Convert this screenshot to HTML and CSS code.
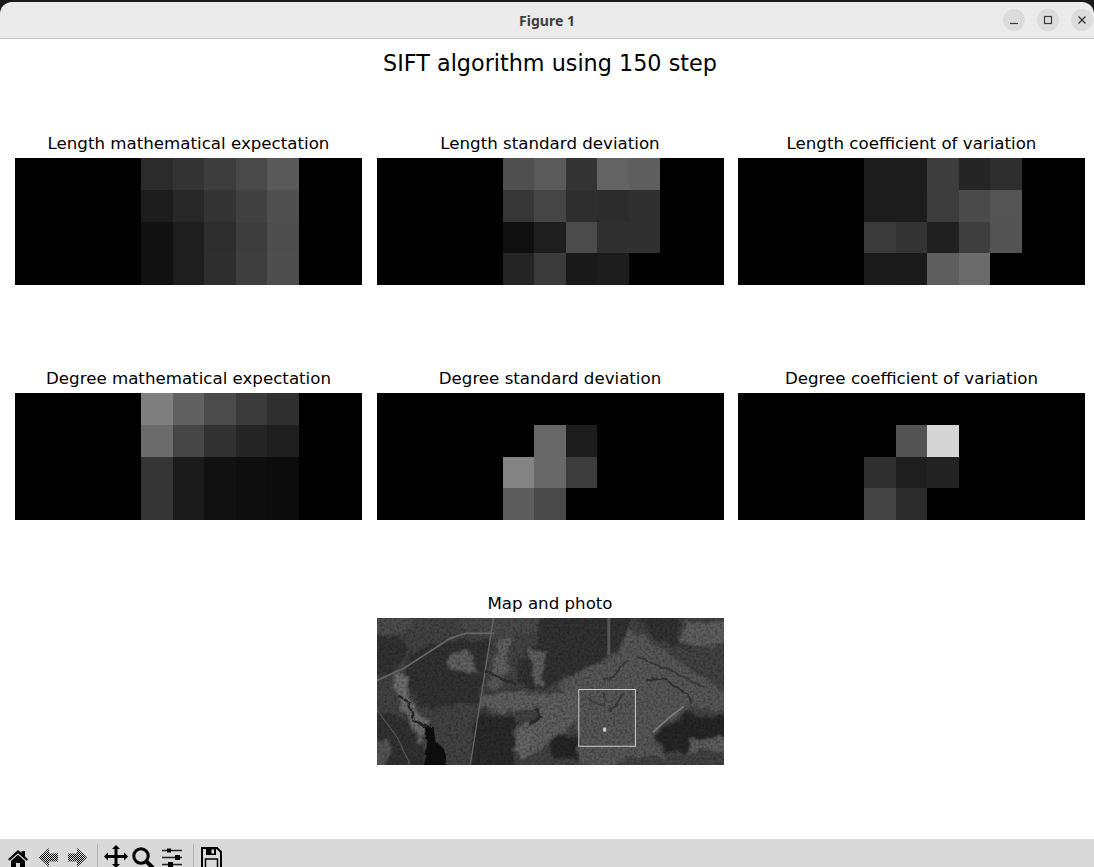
FILE: index.html
```html
<!DOCTYPE html>
<html>
<head>
    <meta charset="UTF-8">
    <title>Figure 1</title>
    <link rel="stylesheet" href="styles.css">
</head>
<body>
    <div id="window">
        <div id="titlebar">
            <span class="window-title">Figure 1</span>
            <div class="window-buttons">
                <button class="win-btn"><svg width="12" height="12" viewBox="0 0 12 12"><path d="M2 9.5h8" stroke="#3a3a3a" stroke-width="1.2"/></svg></button>
                <button class="win-btn"><svg width="12" height="12" viewBox="0 0 12 12"><rect x="2.5" y="2.5" width="7" height="7" fill="none" stroke="#3a3a3a" stroke-width="1.2"/></svg></button>
                <button class="win-btn"><svg width="12" height="12" viewBox="0 0 12 12"><path d="M2.5 2.5l7 7M9.5 2.5l-7 7" stroke="#3a3a3a" stroke-width="1.4"/></svg></button>
            </div>
        </div>

        <div id="figure">
            <h1 class="suptitle">SIFT algorithm using 150 step</h1>
            <div class="axes-grid">
                <div class="axes"><h2>Length mathematical expectation</h2><div class="heatmap" id="len-mean"></div></div>
                <div class="axes"><h2>Length standard deviation</h2><div class="heatmap" id="len-std"></div></div>
                <div class="axes"><h2>Length coefficient of variation</h2><div class="heatmap" id="len-cv"></div></div>
                <div class="axes"><h2>Degree mathematical expectation</h2><div class="heatmap" id="deg-mean"></div></div>
                <div class="axes"><h2>Degree standard deviation</h2><div class="heatmap" id="deg-std"></div></div>
                <div class="axes"><h2>Degree coefficient of variation</h2><div class="heatmap" id="deg-cv"></div></div>
                <div class="axes map-axes">
                    <h2>Map and photo</h2>
                    <svg class="map" viewBox="20 24 1042 440" preserveAspectRatio="none">
                        <defs>
                            <filter id="grain" x="0" y="0" width="100%" height="100%">
                                <feTurbulence type="fractalNoise" baseFrequency="0.14" numOctaves="2" seed="4"/>
                                <feColorMatrix values="0 0 0 0 0  0 0 0 0 0  0 0 0 0 0  0.7 0 0 0 -0.26"/>
                            </filter>
                            <filter id="rough" x="-5%" y="-5%" width="110%" height="110%">
                                <feTurbulence type="fractalNoise" baseFrequency="0.03" numOctaves="3" seed="9" result="n"/>
                                <feDisplacementMap in="SourceGraphic" in2="n" scale="34" xChannelSelector="R" yChannelSelector="G"/>
                                <feGaussianBlur stdDeviation="2.5"/>
                            </filter>
                            <filter id="rough-thin" x="-5%" y="-5%" width="110%" height="110%">
                                <feTurbulence type="fractalNoise" baseFrequency="0.05" numOctaves="2" seed="3" result="n"/>
                                <feDisplacementMap in="SourceGraphic" in2="n" scale="14" xChannelSelector="R" yChannelSelector="G"/>
                                <feGaussianBlur stdDeviation="1.5"/>
                            </filter>
                            <filter id="soft"><feGaussianBlur stdDeviation="1.5"/></filter>
                        </defs>
                        <rect x="20" y="24" width="1042" height="440" fill="#434343"/>
                        <g filter="url(#rough)">
                            <!-- forest -->
                            <polygon fill="#303030" points="510,10 780,10 780,90 720,130 640,180 560,210 520,240 440,220 450,150 505,100"/>
                            <polygon fill="#333" points="120,130 240,90 360,90 340,190 320,290 230,280 150,300 110,200"/>
                            <polygon fill="#292929" points="320,300 440,330 430,480 300,480"/>
                            <polygon fill="#262626" points="860,370 960,310 1075,320 1075,380 960,390 950,430 880,420"/>
                            <polygon fill="#323232" points="790,10 930,10 920,100 985,125 860,90"/>
                            <polygon fill="#333" points="5,300 110,330 190,480 5,480"/>
                            <polygon fill="#252525" points="540,400 570,370 620,390 625,450 560,450"/>
                            <polygon fill="#313131" points="5,90 70,50 120,120 70,180 5,200"/>
                            <!-- cleared land and town -->
                            <polygon fill="#585858" points="560,220 640,180 740,130 780,60 850,100 950,170 1075,250 1075,310 960,290 890,340 850,370 880,440 790,440 700,480 620,440 625,330"/>
                            <polygon fill="#5e5e5e" points="330,265 440,240 520,250 620,250 620,340 550,380 510,420 470,440 440,440 430,370 450,340 500,330 500,290 450,300 400,310 330,290"/>
                            <polygon fill="#4e4e4e" points="5,10 130,10 120,50 60,80 5,80"/>
                            <polygon fill="#4b4b4b" points="260,10 510,10 500,70 370,80 280,60"/>
                            <polygon fill="#606060" points="240,125 295,125 330,190 235,178"/>
                            <polygon fill="#606060" points="385,85 420,85 410,195 365,195"/>
                            <polygon fill="#5a5a5a" points="360,195 405,200 395,235 355,235"/>
                            <polygon fill="#606060" points="475,110 530,125 515,235 490,220"/>
                            <polygon fill="#5e5e5e" points="940,40 1075,30 1075,90 1000,110 935,100"/>
                            <polygon fill="#5e5e5e" points="960,385 1075,380 1075,425 1000,420 960,430"/>
                            <polygon fill="#6e6e6e" points="75,190 110,190 130,290 170,330 150,400 130,350 90,290 70,240"/>
                            <polygon fill="#565656" points="5,390 55,390 55,480 5,480"/>
                            <polygon fill="#666" points="440,360 480,350 490,400 460,445 435,420"/>
                        </g>
                        <rect x="20" y="24" width="1042" height="440" filter="url(#grain)"/>
                        <!-- roads -->
                        <g fill="none" stroke-linecap="round" filter="url(#soft)">
                            <polyline stroke="#666" stroke-width="5" points="20,210 100,175 240,85 285,70 370,70"/>
                            <line stroke="#666" stroke-width="4" x1="370" y1="24" x2="300" y2="464"/>
                            <line stroke="#565656" stroke-width="9" x1="716" y1="24" x2="716" y2="130"/>
                            <polyline stroke="#5a5a5a" stroke-width="3" points="20,300 80,380 120,464"/>
                            <polyline stroke="#7c7c7c" stroke-width="5" points="850,365 900,320 940,290"/>
                        </g>
                        <!-- creeks -->
                        <g fill="none" stroke-linecap="round" filter="url(#rough-thin)">
                            <line stroke="#2a2a2a" stroke-width="6" x1="345" y1="183" x2="440" y2="225"/>
                            <polyline stroke="#333" stroke-width="5" points="770,150 730,200 700,210"/>
                            <polyline stroke="#333" stroke-width="5" points="760,250 740,280 720,300"/>
                            <polyline stroke="#383838" stroke-width="4" points="700,250 705,290 650,265"/>
                            <polyline stroke="#2e2e2e" stroke-width="6" points="830,210 880,205 950,250 965,280"/>
                            <polyline stroke="#363636" stroke-width="5" points="800,140 900,180 1000,230"/>
                            <polyline stroke="#222" stroke-width="6" points="85,260 115,275 130,330 170,350"/>
                            <polyline stroke="#2a2a2a" stroke-width="10" points="500,295 510,320 480,340"/>
                            <polygon fill="#0f0f0f" points="165,350 190,350 195,390 225,420 230,470 160,470 170,410"/>
                        </g>
                        <rect x="699" y="352" width="9" height="12" fill="#d0d0d0" filter="url(#soft)"/>
                        <rect x="626" y="238" width="170" height="170" fill="none" stroke="#cfcfcf" stroke-width="3"/>
                    </svg>
                </div>
            </div>
        </div>

        <div id="toolbar">
            <svg class="tool" viewBox="0 0 24 24"><path d="M12 5l3.500 3V6H19v5.600l3 2.700-1.400 1.500L12 8.300l-8.600 7.500L2 14.300z"/><path d="M5 16l7-6.200 7 6.200v8h-5v-6h-4v6H5z"/></svg>
            <svg class="tool" viewBox="0 0 24 24"><defs><pattern id="checker" width="2" height="2" patternUnits="userSpaceOnUse"><rect width="1" height="1"/><rect x="1" y="1" width="1" height="1"/></pattern></defs><polygon fill="url(#checker)" points="4,12.500 14,3 14,8.500 23,8.500 23,16.500 14,16.500 14,22"/></svg>
            <svg class="tool" viewBox="0 0 24 24"><polygon fill="url(#checker)" points="23,12.500 13,3 13,8.500 4,8.500 4,16.500 13,16.500 13,22"/></svg>
            <span class="tool-sep tool-sep-nav"></span>
            <svg class="tool" viewBox="0 0 24 24"><path d="M12 0l4 4h-2.500v6H20V7.500l4 4-4 4V13h-6.500v6H16l-4 4-4-4h2.500v-6H4v2.500l-4-4 4-4V10h6.500V4H8z"/></svg>
            <svg class="tool tool-zoom" viewBox="0 0 24 24"><circle cx="10" cy="11" r="7.200" fill="none" stroke="#000" stroke-width="3"/><path d="M15 16l7 7" stroke="#000" stroke-width="4"/></svg>
            <svg class="tool tool-sliders" viewBox="0 0 24 24"><path d="M1 5.500h20M1 12.500h20M1 19.500h20" stroke="#222" stroke-width="1.500"/><rect x="6" y="3.500" width="4" height="4"/><rect x="14" y="10" width="5" height="5"/><rect x="7" y="17" width="5" height="5"/></svg>
            <span class="tool-sep tool-sep-save"></span>
            <svg class="tool" viewBox="0 0 24 24"><path d="M3 3h15l4 4v16H3z" fill="none" stroke="#000" stroke-width="2"/><path d="M7 3h10v7H7z"/><rect x="12.500" y="4.500" width="2.500" height="4" fill="#d9d9d9"/><rect x="6.500" y="14" width="12" height="9" fill="none" stroke="#000" stroke-width="1.500"/></svg>
        </div>
    </div>

    <script>
        // only columns 4..8 of the 11 x 4 maps have values, the rest is black
        const maps = {
            'len-mean': ['2b 33 3d 49 59', '1c 27 34 41 50', '11 1e 2d 3d 4d', '11 1e 2e 3e 4e'],
            'len-std': ['4f 5a 33 63 5f', '36 45 2e 2c 30', '0f 1e 4b 30 30', '24 3a 19 1c 00'],
            'len-cv': ['1c 1c 3d 25 2e', '1c 1c 3c 4a 54', '3a 34 20 3f 53', '1a 1b 5e 6b 00'],
            'deg-mean': ['7f 61 4b 3b 30', '6b 46 32 25 1f', '35 1b 12 0e 0c', '35 1b 12 0e 0c'],
            'deg-std': ['00 00 00 00 00', '00 67 1c 00 00', '83 68 3c 00 00', '5d 4a 00 00 00'],
            'deg-cv': ['00 00 00 00 00', '00 53 d5 00 00', '2f 1e 23 00 00', '44 2b 00 00 00']
        };

        Object.keys(maps).forEach(id => {
            const heatmap = document.getElementById(id);
            maps[id].forEach(row => {
                const values = ['00', '00', '00', '00', ...row.split(' '), '00', '00'];
                values.forEach(v => {
                    const cell = document.createElement('div');
                    cell.style.background = `#${v}${v}${v}`;
                    heatmap.appendChild(cell);
                });
            });
        });
    </script>
</body>
</html>
```

FILE: styles.css
```css
* {
    box-sizing: border-box;
}

html, body {
    margin: 0;
    height: 100%;
    overflow: hidden;
}

body {
    background: #1a1a1a;
    font-family: "DejaVu Sans", sans-serif;
}

#window {
    height: 100%;
    padding-top: 2px;
    display: flex;
    flex-direction: column;
}

#titlebar {
    height: 37px;
    flex: none;
    background: #ebebeb;
    border-bottom: 1px solid #c4c4c4;
    border-radius: 12px 12px 0 0;
    display: flex;
    align-items: center;
    justify-content: center;
    position: relative;
}

.window-title {
    font-family: "Noto Sans", sans-serif;
    font-size: 14px;
    font-weight: 700;
    line-height: 20px;
    padding-top: 1px;
    color: #404040;
}

.window-buttons {
    position: absolute;
    right: 1px;
    top: 7px;
    display: flex;
    gap: 12px;
}

.win-btn {
    width: 22px;
    height: 22px;
    padding: 0;
    border: none;
    border-radius: 50%;
    background: #dcdcdc;
    display: flex;
    align-items: center;
    justify-content: center;
}

#figure {
    flex: 1;
    min-height: 0;
    background: white;
    padding: 0 9px 0 15px;
}

.suptitle {
    margin: 0;
    height: 55px;
    padding-top: 8px;
    font-size: 22.300px;
    font-weight: 400;
    line-height: 33px;
    text-align: center;
    color: black;
}

.axes-grid {
    display: grid;
    grid-template-columns: repeat(3, 347px);
    column-gap: 14.500px;
    row-gap: 83px;
    padding-top: 39px;
}

.axes h2 {
    margin: 0;
    height: 25px;
    font-size: 16.670px;
    font-weight: 400;
    line-height: 21px;
    text-align: center;
    color: black;
}

.heatmap {
    height: 127px;
    background: black;
    display: grid;
    grid-template-columns: repeat(11, 1fr);
    grid-template-rows: repeat(4, 1fr);
}

.map-axes {
    grid-column: 2;
    margin-top: -10px;
}

.map {
    display: block;
    width: 347px;
    height: 147px;
}

#toolbar {
    height: 28px;
    flex: none;
    background: #d9d9d9;
    overflow: hidden;
    padding: 6px 0 0 3px;
    display: flex;
    align-items: flex-start;
}

.tool {
    width: 24px;
    height: 24px;
    margin: 0 2.500px;
    flex: none;
}

.tool-zoom {
    margin-left: 1px;
    margin-right: 3px;
}

.tool-sliders {
    margin-left: 3px;
}

.tool-sep {
    width: 1px;
    height: 23px;
    margin-top: -1px;
    margin-right: 3px;
    background: #b4b4b4;
    flex: none;
}

.tool-sep-nav {
    margin-left: 7px;
}

.tool-sep-save {
    margin-left: 5px;
}
```
